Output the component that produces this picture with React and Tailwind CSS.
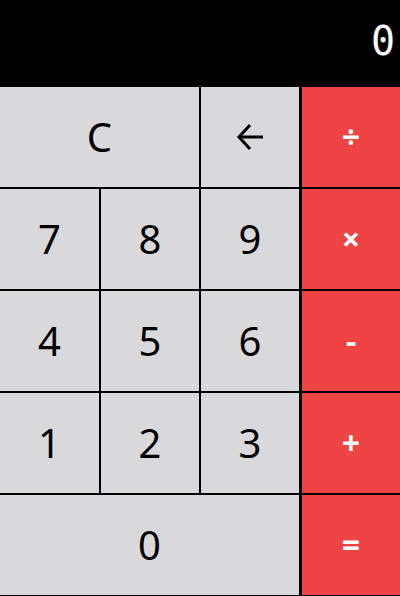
import React, { useState } from 'react'

const keys = [
  { label: 'C', span: 'col-span-2', kind: 'clear' },
  { label: 'back', kind: 'back' },
  { label: '÷', kind: 'op' },
  { label: '7' }, { label: '8' }, { label: '9' }, { label: '×', kind: 'op' },
  { label: '4' }, { label: '5' }, { label: '6' }, { label: '-', kind: 'op' },
  { label: '1' }, { label: '2' }, { label: '3' }, { label: '+', kind: 'op' },
  { label: '0', span: 'col-span-3' },
  { label: '=', kind: 'op' },
]

const BackArrow = () => (
  <svg width="30" height="28" viewBox="0 0 30 28" fill="none" stroke="black" strokeWidth="3" strokeLinecap="butt" strokeLinejoin="miter">
    <path d="M4 14 H28" />
    <path d="M15 2 L4 14 L15 26" />
  </svg>
)

const App = () => {
  const [value] = useState('0')

  return (
    <div className="w-[400px] h-[596px] bg-black flex flex-col font-['Noto_Sans',sans-serif]">
      <div className="h-[86px] flex items-center justify-end pr-[5px] pb-[4px] text-white text-[40px] font-['DejaVu_Sans_Mono',monospace]">
        {value}
      </div>
      <div className="grid grid-cols-[99px_98px_98px_99px] grid-rows-[repeat(5,100px)] gap-[2px] pt-[1px]">
        {keys.map((k, i) => (
          <button
            key={i}
            className={
              k.kind === 'op'
                ? 'border-l border-black bg-[#ef4444] text-white text-[32px] font-bold flex items-center justify-center'
                : `${k.span || ''} bg-[#d9d9db] text-black text-[40px] flex items-center justify-center`
            }
          >
            {k.kind === 'back' ? <BackArrow /> : k.label}
          </button>
        ))}
      </div>
    </div>
  )
}

export default App
